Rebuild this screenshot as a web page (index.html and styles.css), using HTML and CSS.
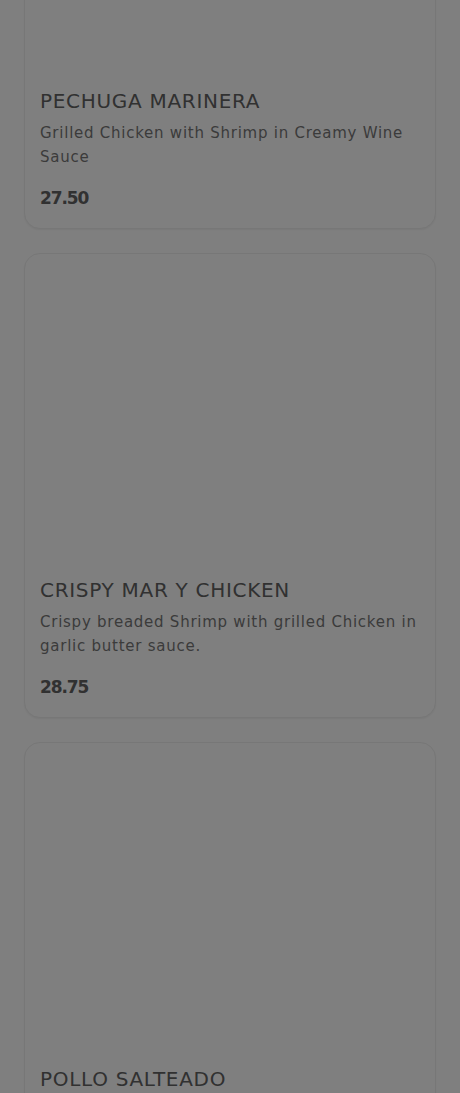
FILE: index.html
```html
<!DOCTYPE html>
<html lang="en">
<head>
<meta charset="utf-8">
<title>Menu</title>
<link rel="stylesheet" href="styles.css">
</head>
<body>
<main class="menu">
  <article class="card">
    <div class="card-image"></div>
    <div class="card-body">
      <h3 class="card-title">PECHUGA MARINERA</h3>
      <p class="card-desc">Grilled Chicken with Shrimp in Creamy Wine Sauce</p>
      <p class="card-price">27.50</p>
    </div>
  </article>
  <article class="card">
    <div class="card-image"></div>
    <div class="card-body">
      <h3 class="card-title">CRISPY MAR Y CHICKEN</h3>
      <p class="card-desc">Crispy breaded Shrimp with grilled Chicken in garlic butter sauce.</p>
      <p class="card-price">28.75</p>
    </div>
  </article>
  <article class="card">
    <div class="card-image"></div>
    <div class="card-body">
      <h3 class="card-title">POLLO SALTEADO</h3>
      <p class="card-desc">Sautéed Chicken with onions, tomatoes and fries.</p>
      <p class="card-price">24.50</p>
    </div>
  </article>
</main>
<div class="overlay"></div>
</body>
</html>
```
FILE: styles.css
```css
html, body {
  margin: 0;
  padding: 0;
  background: #ffffff;
}
body {
  font-family: "DejaVu Sans", "Noto Sans", sans-serif;
  color: #666666;
}
.menu {
  display: flex;
  flex-direction: column;
  gap: 24px;
  padding: 0 24px 24px;
  margin-top: -236px;
}
.card {
  border: 1px solid #eeeeee;
  border-radius: 16px;
  background: #ffffff;
  box-shadow: 0 1px 2px rgba(0,0,0,0.06);
  overflow: hidden;
}
.card-image {
  height: 306px;
}
.card-body {
  padding: 16px 15px 17px;
  display: flex;
  flex-direction: column;
}
.card-title {
  margin: 0;
  font-size: 20px;
  line-height: 28px;
  font-weight: 500;
  color: #626262;
  letter-spacing: 0.7px;
}
.card-desc {
  margin: 6px 0 0;
  font-size: 15px;
  line-height: 24px;
  color: #777777;
  letter-spacing: 0.75px;
}
.card-price {
  margin: 16px 0 0;
  font-size: 17px;
  line-height: 26px;
  font-weight: 600;
  color: #626262;
  letter-spacing: -1.1px;
}
.overlay {
  position: fixed;
  inset: 0;
  background: rgba(0,0,0,0.5);
}
```
